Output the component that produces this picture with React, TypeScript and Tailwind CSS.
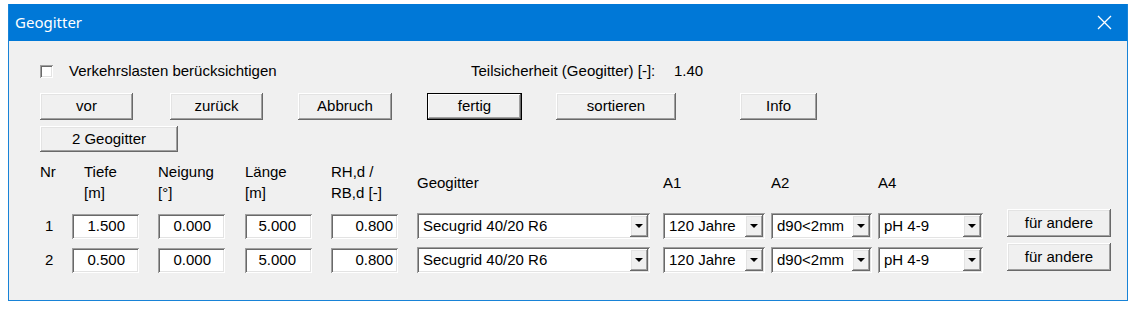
import React from "react";

// classic win32 3D looks
const raised =
  "bg-[#f0f0f0] shadow-[inset_-1px_-1px_#696969,inset_1px_1px_#ffffff,inset_-2px_-2px_#a0a0a0,inset_2px_2px_#e3e3e3]";
const defaultRaised =
  "bg-[#f0f0f0] shadow-[inset_0_0_0_1px_#000000,inset_-2px_-2px_#696969,inset_2px_2px_#ffffff,inset_-3px_-3px_#a0a0a0]";
const sunken =
  "bg-white shadow-[inset_1px_1px_#a0a0a0,inset_-1px_-1px_#ffffff,inset_2px_2px_#696969,inset_-2px_-2px_#e3e3e3]";

const cols = [
  "w-[32px]",
  "w-[67px]",
  "ml-[19px] w-[67px]",
  "ml-[20px] w-[67px]",
  "ml-[19px] w-[67px]",
  "ml-[19px] w-[233px]",
  "ml-[13px] w-[102px]",
  "ml-[6px] w-[101px]",
  "ml-[6px] w-[105px]",
  "ml-[24px] w-[104px]",
];

const rows = [
  { nr: "1", tiefe: "1.500", neigung: "0.000", laenge: "5.000", rh: "0.800" },
  { nr: "2", tiefe: "0.500", neigung: "0.000", laenge: "5.000", rh: "0.800" },
];

function Btn({ label, cls, def }: { label: string; cls: string; def?: boolean }) {
  return (
    <div className={`${def ? defaultRaised : raised} ${cls} flex items-center justify-center`}>
      {label}
    </div>
  );
}

function Field({ value, cls, pr }: { value: string; cls: string; pr: string }) {
  return (
    <div className={`${cls} ${sunken} ${pr} h-[25px] mt-[5px] flex items-center justify-end`}>
      {value}
    </div>
  );
}

function Combo({ value, cls }: { value: string; cls: string }) {
  return (
    <div className={`${cls} ${sunken} h-[26px] mt-[4px] flex items-center pl-[6px] pr-[2px]`}>
      <span className="flex-1 whitespace-nowrap overflow-hidden">{value}</span>
      <div className={`${raised} w-[18px] h-[22px] flex items-center justify-center`}>
        <svg width="8" height="4" viewBox="0 0 8 4">
          <path d="M0 0h8L4 4z" fill="#000" />
        </svg>
      </div>
    </div>
  );
}

export default function App() {
  return (
    <div className="w-[1141px] h-[310px] bg-white pt-[4px] pl-[8px] font-['Liberation_Sans',Arial,sans-serif] text-[15px] text-black">
      <div className="w-[1120px] h-[297px] flex flex-col border-x border-b border-[#1883d7]">
        {/* title bar */}
        <div className="h-[37px] bg-[#0078d7] flex items-center pl-[6px]">
          <span className="font-['Noto_Sans',sans-serif] text-[15px] text-white">Geogitter</span>
          <div className="ml-auto w-[46px] h-full flex items-center justify-center">
            <svg width="15" height="15" viewBox="0 0 15 15">
              <path d="M1 1L14 14M14 1L1 14" stroke="#fff" strokeWidth="1.3" />
            </svg>
          </div>
        </div>

        <div className="flex-1 bg-[#f0f0f0] pl-[31px]">
          {/* checkbox + safety factor */}
          <div className="mt-[20px] h-[20px] flex items-center">
            <div className="w-[431px] flex items-center">
              <div className={`${sunken} w-[13px] h-[13px]`} />
              <span className="ml-[16px]">Verkehrslasten berücksichtigen</span>
            </div>
            <span className="w-[203px]">Teilsicherheit (Geogitter) [-]:</span>
            <span>1.40</span>
          </div>

          {/* action buttons */}
          <div className="mt-[12px] h-[27px] flex">
            <Btn label="vor" cls="w-[93px]" />
            <Btn label="zurück" cls="ml-[37px] w-[93px]" />
            <Btn label="Abbruch" cls="ml-[35px] w-[94px]" />
            <Btn label="fertig" cls="ml-[35px] w-[95px]" def />
            <Btn label="sortieren" cls="ml-[34px] w-[120px]" />
            <Btn label="Info" cls="ml-[64px] w-[77px]" />
          </div>

          <div className="mt-[6px] h-[26px] flex">
            <Btn label="2 Geogitter" cls="w-[138px]" />
          </div>

          {/* column headers */}
          <div className="mt-[9px] h-[42px] flex leading-[21px]">
            <div className={cols[0]}>Nr</div>
            <div className={`${cols[1]} pl-[12px]`}>
              <div>Tiefe</div>
              <div>[m]</div>
            </div>
            <div className={cols[2]}>
              <div>Neigung</div>
              <div>[°]</div>
            </div>
            <div className={cols[3]}>
              <div>Länge</div>
              <div>[m]</div>
            </div>
            <div className={cols[4]}>
              <div>RH,d /</div>
              <div>RB,d [-]</div>
            </div>
            <div className={`${cols[5]} flex items-center`}>Geogitter</div>
            <div className={`${cols[6]} flex items-center`}>A1</div>
            <div className={`${cols[7]} flex items-center`}>A2</div>
            <div className={`${cols[8]} flex items-center`}>A4</div>
          </div>

          {/* data rows */}
          <div className="mt-[6px]">
            {rows.map((r) => (
              <div key={r.nr} className="h-[34px] flex items-start">
                <div className={`${cols[0]} pl-[5px] h-[25px] mt-[5px] flex items-center`}>{r.nr}</div>
                <Field value={r.tiefe} cls={cols[1]} pr="pr-[14px]" />
                <Field value={r.neigung} cls={cols[2]} pr="pr-[14px]" />
                <Field value={r.laenge} cls={cols[3]} pr="pr-[16px]" />
                <Field value={r.rh} cls={cols[4]} pr="pr-[5px]" />
                <Combo value="Secugrid 40/20 R6" cls={cols[5]} />
                <Combo value="120 Jahre" cls={cols[6]} />
                <Combo value="d90<2mm" cls={cols[7]} />
                <Combo value="pH 4-9" cls={cols[8]} />
                <Btn label="für andere" cls={`${cols[9]} h-[28px]`} />
              </div>
            ))}
          </div>
        </div>
      </div>
    </div>
  );
}
